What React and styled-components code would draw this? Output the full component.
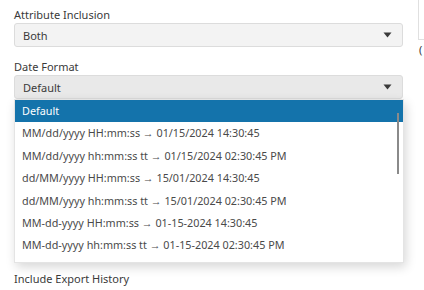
import React from "react";
import styled, { createGlobalStyle } from "styled-components";

const GlobalStyle = createGlobalStyle`
  html, body {
    margin: 0;
    padding: 0;
    background: #ffffff;
    overflow: hidden;
  }
  body {
    font-family: "Noto Sans", "Open Sans", sans-serif;
    font-size: 11px;
    color: #333333;
  }
`;

const options = [
  "Default",
  "MM/dd/yyyy HH:mm:ss → 01/15/2024 14:30:45",
  "MM/dd/yyyy hh:mm:ss tt → 01/15/2024 02:30:45 PM",
  "dd/MM/yyyy HH:mm:ss → 15/01/2024 14:30:45",
  "dd/MM/yyyy hh:mm:ss tt → 15/01/2024 02:30:45 PM",
  "MM-dd-yyyy HH:mm:ss → 01-15-2024 14:30:45",
  "MM-dd-yyyy hh:mm:ss tt → 01-15-2024 02:30:45 PM",
];

const Caret = () => (
  <svg width="9" height="6" viewBox="0 0 9 6">
    <path d="M0.5 0.5 H8.5 L4.5 5.5 Z" fill="#3a3a3a" />
  </svg>
);

const App = () => {
  return (
    <Page>
      <GlobalStyle />
      <Form>
        <Field>
          <Label>Attribute Inclusion</Label>
          <Select>
            <span>Both</span>
            <Caret />
          </Select>
        </Field>
        <Field>
          <Label>Date Format</Label>
          <SelectWrap>
            <Select $open>
              <span>Default</span>
              <Caret />
            </Select>
            <Menu>
              {options.map((o, i) => (
                <Option key={o} $active={i === 0}>{o}</Option>
              ))}
              <Scrollbar />
            </Menu>
          </SelectWrap>
        </Field>
        <Spacer />
        <Label>Include Export History</Label>
      </Form>
      <SidePanel>
        <SideBox />
        <SideText>(</SideText>
      </SidePanel>
    </Page>
  );
};

export default App;

const Page = styled.div`
  display: flex;
  width: 424px;
  height: 290px;
  padding: 8px 0 3px 14px;
  box-sizing: border-box;
  overflow: hidden;
`;

const Form = styled.div`
  width: 389px;
  flex-shrink: 0;
  display: flex;
  flex-direction: column;
`;

const Field = styled.div`
  display: flex;
  flex-direction: column;
  margin-bottom: 13px;
`;

const Label = styled.div`
  font-size: 11px;
  line-height: 14px;
  color: #3a3a3a;
  margin-bottom: 1px;
`;

const SelectWrap = styled.div`
  position: relative;
`;

const Select = styled.div`
  height: 24px;
  box-sizing: border-box;
  display: flex;
  align-items: center;
  justify-content: space-between;
  padding: 0 8px;
  border: 1px solid #dcdcdc;
  border-radius: 3px;
  background: ${(p) => (p.$open ? "#e9e9e9" : "#f3f3f3")};
  color: #3a3a3a;
  font-size: 11px;
  svg {
    margin-right: 2px;
  }
`;

const Menu = styled.div`
  position: absolute;
  left: 0;
  top: 24px;
  width: 388px;
  padding-bottom: 5px;
  background: #ffffff;
  border: 1px solid #e4e4e4;
  box-shadow: 2px 4px 10px rgba(0, 0, 0, 0.16);
  z-index: 2;
`;

const Option = styled.div`
  height: 22.4px;
  line-height: 22px;
  padding: 0 7px;
  font-size: 10.8px;
  white-space: nowrap;
  color: ${(p) => (p.$active ? "#ffffff" : "#4a4a4a")};
  background: ${(p) => (p.$active ? "#1473ab" : "transparent")};
`;

const Scrollbar = styled.div`
  position: absolute;
  right: 4px;
  top: 13px;
  width: 2px;
  height: 61px;
  background: #8a8a8a;
`;

const Spacer = styled.div`
  flex: 1;
`;

const SidePanel = styled.div`
  margin-left: 15px;
  margin-top: -8px;
  display: flex;
  flex-direction: column;
  flex-shrink: 0;
`;

const SideBox = styled.div`
  width: 30px;
  height: 39px;
  border-left: 1px solid #e0e0e0;
  border-bottom: 1px solid #e0e0e0;
`;

const SideText = styled.div`
  margin-top: 2px;
  font-size: 11px;
  color: #3a3a3a;
  margin-left: 1px;
`;
